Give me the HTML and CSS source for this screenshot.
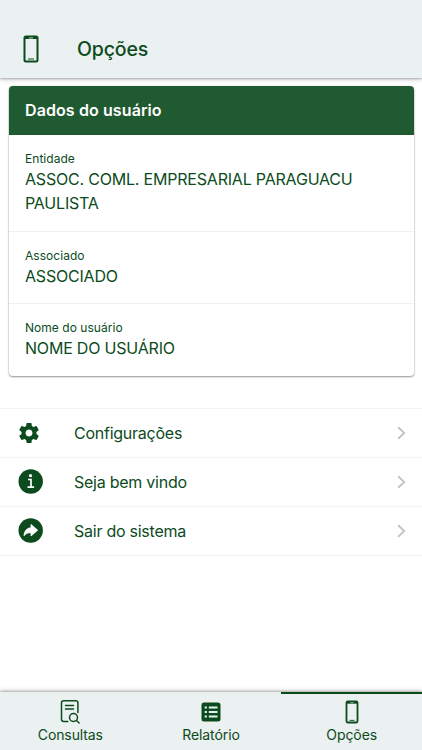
FILE: index.html
```html
<!DOCTYPE html>
<html lang="pt-BR">
<head>
    <meta charset="UTF-8">
    <meta name="viewport" content="width=device-width, initial-scale=1.0">
    <title>Opções</title>
    <link rel="stylesheet" href="styles.css">
</head>
<body>
    <header class="header">
        <svg class="header-icon" width="16" height="28" viewBox="0 0 16 28">
            <rect x="1.5" y="1.5" width="13" height="25" rx="1.5" fill="none" stroke="currentColor" stroke-width="2"/>
            <path d="M2 2h12v2H2z" fill="currentColor"/>
            <path d="M6 2.9h4" stroke="#ebf0f0" stroke-width="0.8"/>
            <path d="M5 24h6" stroke="currentColor" stroke-width="1"/>
        </svg>
        <h1>Opções</h1>
    </header>
    <main class="content">
        <section class="card">
            <h2 class="card-header">Dados do usuário</h2>
            <div class="card-item">
                <div class="label">Entidade</div>
                <div class="value">ASSOC. COML. EMPRESARIAL PARAGUACU PAULISTA</div>
            </div>
            <div class="card-item">
                <div class="label">Associado</div>
                <div class="value">ASSOCIADO</div>
            </div>
            <div class="card-item">
                <div class="label">Nome do usuário</div>
                <div class="value">NOME DO USUÁRIO</div>
            </div>
        </section>
        <ul class="menu">
            <li>
                <svg class="menu-icon gear" width="24" height="24" viewBox="0 0 24 24">
                    <path fill="currentColor" d="M19.43 12.98c.04-.32.07-.64.07-.98s-.03-.66-.07-.98l2.11-1.65c.19-.15.24-.42.12-.64l-2-3.46c-.12-.22-.39-.3-.61-.22l-2.49 1c-.52-.4-1.08-.73-1.69-.98l-.38-2.65C14.46 2.18 14.25 2 14 2h-4c-.25 0-.46.18-.49.42l-.38 2.65c-.61.25-1.17.59-1.69.98l-2.49-1c-.23-.09-.49 0-.61.22l-2 3.46c-.13.22-.07.49.12.64l2.11 1.65c-.04.32-.07.65-.07.98s.03.66.07.98l-2.11 1.65c-.19.15-.24.42-.12.64l2 3.46c.12.22.39.3.61.22l2.49-1c.52.4 1.08.73 1.69.98l.38 2.65c.03.24.24.42.49.42h4c.25 0 .46-.18.49-.42l.38-2.65c.61-.25 1.17-.59 1.69-.98l2.49 1c.23.09.49 0 .61-.22l2-3.46c.12-.22.07-.49-.12-.64l-2.11-1.65zM12 15.5c-1.93 0-3.5-1.57-3.5-3.5s1.57-3.5 3.5-3.5 3.5 1.57 3.5 3.5-1.57 3.5-3.5 3.5z"/>
                </svg>
                <span>Configurações</span>
                <svg class="chevron" width="9" height="14" viewBox="0 0 9 14"><path d="M1.2 1.2L7.2 7l-6 5.8"/></svg>
            </li>
            <li>
                <svg class="menu-icon" width="25" height="25" viewBox="0 0 25 25">
                    <circle cx="12.7" cy="12.5" r="12.2" fill="currentColor"/>
                    <circle cx="12.5" cy="6.7" r="1.6" fill="#fff"/>
                    <path d="M10 10.5h3v7.6M9.5 18.2h6.600" fill="none" stroke="#fff" stroke-width="1.7"/>
                </svg>
                <span>Seja bem vindo</span>
                <svg class="chevron" width="9" height="14" viewBox="0 0 9 14"><path d="M1.2 1.2L7.2 7l-6 5.8"/></svg>
            </li>
            <li>
                <svg class="menu-icon" width="25" height="25" viewBox="0 0 25 25">
                    <circle cx="12.7" cy="12.5" r="12.2" fill="currentColor"/>
                    <path d="M13 6.4l6.700 5.800-6.700 5.800v-3.300c-3 0-5 .5-6.900 3.100 0-4.600 2.500-7.700 6.900-8.100z" fill="#fff" stroke="#fff" stroke-width="0.8" stroke-linejoin="round"/>
                </svg>
                <span>Sair do sistema</span>
                <svg class="chevron" width="9" height="14" viewBox="0 0 9 14"><path d="M1.2 1.2L7.2 7l-6 5.8"/></svg>
            </li>
        </ul>
    </main>
    <nav class="tabs">
        <a class="tab" href="#">
            <svg width="20" height="24" viewBox="0 0 20 24" fill="none" stroke="currentColor" stroke-width="1.5" stroke-linecap="round" stroke-linejoin="round">
                <path d="M7.8 21.5H3.7Q1.5 21.5 1.5 19.3V2.9Q1.5 0.8 3.7 0.8h12Q17.9 0.8 17.9 2.9V12.5M5.5 5.5h8M5.5 9h8"/>
                <circle cx="13.5" cy="17.5" r="4"/>
                <path d="M16.5 20.5l2.6 2.5"/>
            </svg>
            <span>Consultas</span>
        </a>
        <a class="tab" href="#">
            <svg width="20" height="24" viewBox="0 0 20 24">
                <rect x="0.5" y="2.5" width="19" height="19" rx="2.5" fill="currentColor"/>
                <path d="M3.7 7.5h2.2M3.7 12h2.2M3.7 16.5h2.2M7.8 7.5h8.7M7.8 12h8.7M7.8 16.5h8.7" stroke="#ebf0f0" stroke-width="1.8"/>
            </svg>
            <span>Relatório</span>
        </a>
        <a class="tab active" href="#">
            <svg width="20" height="24" viewBox="0 0 20 24">
                <rect x="4.5" y="1.5" width="11" height="21" rx="1.2" fill="none" stroke="currentColor" stroke-width="1.8"/>
                <path d="M5 2h10v1.7H5z" fill="currentColor"/>
                <path d="M8.5 2.6h3" stroke="#ebf0f0" stroke-width="0.6"/>
                <path d="M7.5 20.4h5" stroke="currentColor" stroke-width="0.9"/>
            </svg>
            <span>Opções</span>
        </a>
    </nav>
</body>
</html>
```

FILE: styles.css
```css
* {
    box-sizing: border-box;
}

body {
    display: flex;
    flex-direction: column;
    height: 100vh;
    margin: 0;
    overflow: hidden;
    background-color: #fff;
    color: #0c4b1d;
    font-family: Inter, "Liberation Sans", sans-serif;
}

.header {
    display: flex;
    align-items: center;
    gap: 38px;
    height: 78px;
    padding: 20px 23px 0;
    background-color: #ebf0f0;
    box-shadow: 0 1px 2px rgba(0, 0, 0, 0.25), 0 2px 5px rgba(0, 0, 0, 0.14);
}

.header h1 {
    margin: 0;
    font-size: 19.5px;
    font-weight: 500;
    line-height: 24px;
    letter-spacing: -0.15px;
}

.content {
    flex: 1;
    padding-top: 8px;
}

.card {
    height: 290px;
    margin: 0 8.5px;
    border-radius: 4px;
    overflow: hidden;
    box-shadow: 0 1px 2px rgba(0, 0, 0, 0.4), 0 0 2px rgba(0, 0, 0, 0.12);
}

.card-header {
    margin: 0;
    height: 49px;
    padding-left: 16.5px;
    background-color: #1f5a30;
    color: #fff;
    font-size: 16px;
    font-weight: 600;
    line-height: 49px;
    letter-spacing: 0.1px;
}

.card-item {
    height: 72px;
    padding: 16px 16.5px 0;
    border-bottom: 1px solid #f0f0f0;
}

.card-item:nth-child(2) {
    height: 97px;
}

.card-item:last-child {
    border-bottom: none;
}

.label {
    font-size: 12px;
    line-height: 16px;
    letter-spacing: 0.04px;
}

.value {
    font-size: 16px;
    line-height: 24px;
    letter-spacing: -0.2px;
}

.menu {
    list-style: none;
    margin: 32px 0 0;
    padding: 0;
    border-top: 1px solid #f3f3f3;
}

.menu li {
    display: flex;
    align-items: center;
    height: 49px;
    padding: 0 16px 0 18px;
    border-bottom: 1px solid #f3f3f3;
    font-size: 16px;
    letter-spacing: -0.25px;
}

.menu-icon {
    width: 25px;
    margin: 0 31px 2px 0;
}

.menu .gear {
    width: 24px;
    margin: 0 33px 0 -1px;
}

.chevron {
    margin: 0 0 1px auto;
    fill: none;
    stroke: #c4c4c4;
    stroke-width: 1.9;
}

.tabs {
    display: flex;
    height: 58px;
    background-color: #ebf0f0;
    box-shadow: 0 -1px 2px rgba(0, 0, 0, 0.25), 0 -2px 5px rgba(0, 0, 0, 0.12);
}

.tab {
    flex: 1;
    display: flex;
    flex-direction: column;
    align-items: center;
    padding-top: 6px;
    border-top: 2px solid transparent;
    color: inherit;
    font-size: 14px;
    line-height: 17px;
    letter-spacing: -0.1px;
    text-decoration: none;
}

.tab span {
    margin-top: 2px;
}

.tab.active {
    border-top-color: #0c4b1d;
}
```
